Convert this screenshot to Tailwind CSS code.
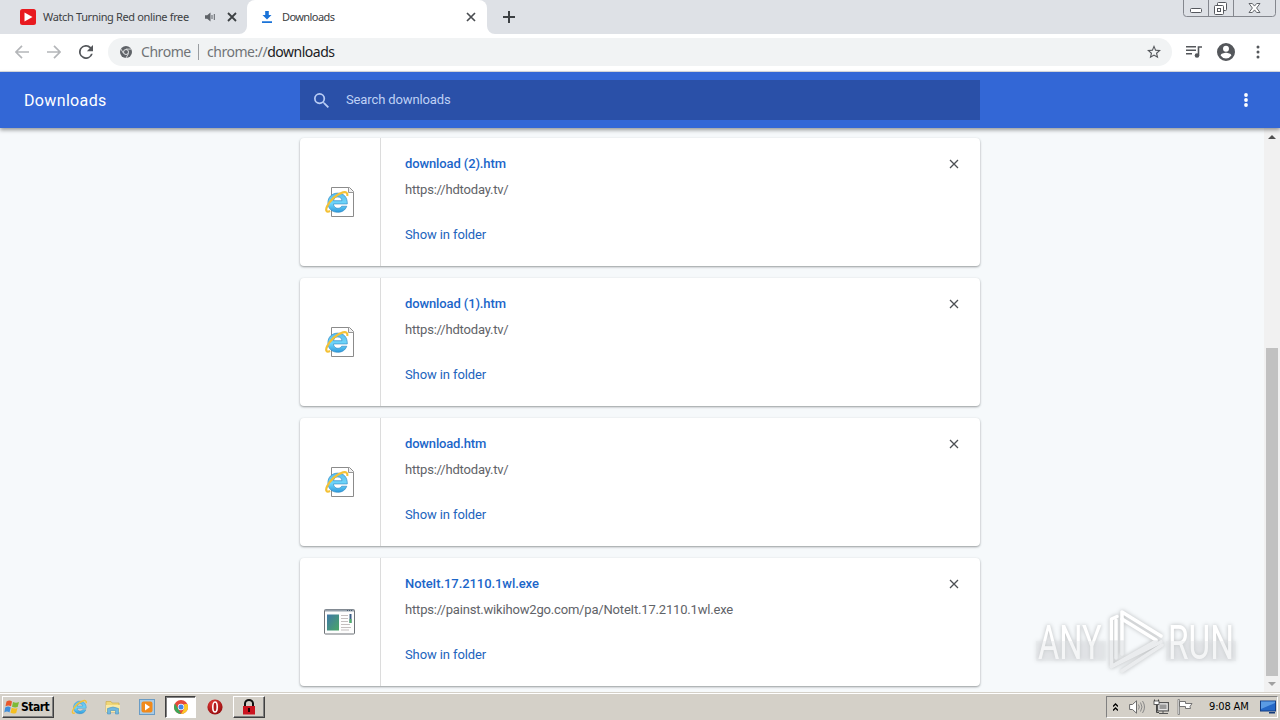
<!DOCTYPE html>
<html lang="en">
<head>
<meta charset="utf-8">
<title>Downloads</title>
<script src="https://cdn.jsdelivr.net/npm/@tailwindcss/browser@4"></script>
</head>
<body class="w-[1280px] h-[720px] overflow-hidden bg-white font-['Roboto',sans-serif]">
<svg class="absolute w-0 h-0">
  <defs>
    <linearGradient id="ieb" x1="0" y1="0" x2="0" y2="1"><stop offset="0" stop-color="#5cbcec"/><stop offset=".55" stop-color="#6fd6fa"/><stop offset="1" stop-color="#2f9bdc"/></linearGradient>
    <linearGradient id="scr" x1="0" y1="0" x2="1" y2="1"><stop offset="0" stop-color="#3f78a8"/><stop offset="1" stop-color="#4aa765"/></linearGradient>
    <radialGradient id="op" cx=".4" cy=".3" r=".8"><stop offset="0" stop-color="#e8403c"/><stop offset="1" stop-color="#8c0508"/></radialGradient>
    <linearGradient id="wm" gradientUnits="userSpaceOnUse" x1="0" y1="0" x2="0" y2="76"><stop offset=".5" stop-color="#ffffff"/><stop offset=".51" stop-color="#eaecee"/></linearGradient>
  </defs>
  <symbol id="ie" viewBox="0 0 24 24">
    <path d="M21.500 13.800H8.700c.2 2.600 1.900 4 4.100 4 1.700 0 2.900-.7 3.500-1.900h4.700c-1.300 3.700-4.300 5.600-8.400 5.600-5.400 0-9-3.500-9-8.700C3.600 7.500 7.400 3.800 12.600 3.800c5.700 0 9.100 3.800 8.900 10zM8.800 10.800h7.800c-.2-2.200-1.700-3.500-3.900-3.500-2.100 0-3.500 1.300-3.900 3.500z" fill="url(#ieb)" stroke="#2b86c2" stroke-width=".6"/>
    <path d="M21.500 6.500c.6-2.800-1-4.200-4-3.400C12 4.500 5.500 10.300 2.900 15.900c-1.900 4.200-.6 6 2.700 4.500" fill="none" stroke="#f4c136" stroke-width="2"/>
  </symbol>
  <symbol id="htm" viewBox="0 0 32 32">
    <path d="M7.500 1.500h18l4 4v25h-22z" fill="#fff" stroke="#8b8b8b"/>
    <path d="M24.500 1.500v5h5" fill="#eee" stroke="#999"/>
    <svg x="0" y="3" width="26" height="26" viewBox="0 0 24 24"><use href="#ie"/></svg>
  </symbol>
  <symbol id="x" viewBox="0 0 10 10"><path d="M1 1l8 8M9 1l-8 8" stroke="currentColor" stroke-width="1.300" fill="none"/></symbol>
</svg>

<div class="h-[720px] flex flex-col">
  <!-- tab strip -->
  <div class="h-[34px] shrink-0 bg-[#dee1e6] flex text-[#3c4043] font-['Noto_Sans',sans-serif]">
    <div class="w-[247px] flex items-center pl-5">
      <svg class="w-4 h-4" viewBox="0 0 16 16"><rect width="16" height="16" rx="2.500" fill="#e8191f"/><path d="M4.500 3.500l8 4.500-8 4.500z" fill="#fff"/></svg>
      <span class="ml-[7px] w-[148px] whitespace-nowrap text-[11px] tracking-[-0.36px]">Watch Turning Red online free</span>
      <svg class="ml-[14px] w-[11px] h-[10px]" viewBox="0 0 11 10"><path d="M0 3.300h2.200L5.500.5v9L2.200 6.700H0z" fill="#5f6368"/><path d="M7 3v4M9.300 2v6" stroke="#5f6368" fill="none"/></svg>
      <svg class="ml-[11px] w-[10px] h-[10px] text-[#3c4043]" viewBox="0 0 10 10"><path d="M1 1l8 8M9 1l-8 8" stroke="currentColor" stroke-width="1.800"/></svg>
    </div>
    <div class="relative w-[240px] bg-white rounded-t-[8px] flex items-center pl-[15px]">
      <svg class="absolute -left-2 bottom-0 w-2 h-2" viewBox="0 0 8 8"><path d="M8 0v8H0a8 8 0 0 0 8-8z" fill="#fff"/></svg>
      <svg class="absolute -right-2 bottom-0 w-2 h-2" viewBox="0 0 8 8"><path d="M0 0v8h8a8 8 0 0 1-8-8z" fill="#fff"/></svg>
      <svg class="w-[10px] h-[12px]" viewBox="0 0 10 12"><path d="M3.200 0h3.600v4H9.500L5 8.600.5 4h2.700zM0 10.300h10V12H0z" fill="#1a73d8"/></svg>
      <span class="ml-[10px] w-[184px] text-[11px] tracking-[-0.58px]">Downloads</span>
      <svg class="w-[10px] h-[10px]" viewBox="0 0 10 10"><path d="M1 1l8 8M9 1l-8 8" stroke="#4a4d51" stroke-width="1.700"/></svg>
    </div>
    <div class="flex-1 flex items-center pl-4">
      <svg class="w-3 h-3" viewBox="0 0 12 12"><path d="M6 0v12M0 6h12" stroke="#3c4043" stroke-width="2"/></svg>
    </div>
    <svg class="w-[98px] h-[18px]" viewBox="0 0 98 18">
      <path d="M1.500-2v15.500q0 3 3 3h86q3 0 3-3V-2M26.500 0v16M51.500 0v16" fill="none" stroke="#84878e"/>
      <rect x="8.500" y="8.500" width="11" height="4" rx="1" fill="#fff" stroke="#55585e"/>
      <rect x="35.500" y="2.500" width="9" height="8" rx="1" fill="#fff" stroke="#55585e"/><rect x="32.500" y="5.500" width="9" height="9" rx="1" fill="#fff" stroke="#55585e"/><rect x="35.500" y="8.500" width="3" height="3" fill="none" stroke="#55585e"/>
      <path d="M67 3.500h3.300l2.200 2.600 2.200-2.600H78l-3.400 4.500 3.400 4.500h-3.300l-2.200-2.600-2.200 2.600H67l3.400-4.500z" fill="#fff" stroke="#55585e" stroke-width=".9"/>
    </svg>
  </div>

  <!-- toolbar -->
  <div class="h-[38px] shrink-0 bg-white border-b border-[#dcdee2] flex items-center pl-[15px] pb-[2px]">
    <svg class="w-[14px] h-[14px]" viewBox="0 0 14 14"><path d="M14 7H1M7 .8L.9 7 7 13.200" fill="none" stroke="#b4b6b9" stroke-width="1.700"/></svg>
    <svg class="ml-[18px] w-[14px] h-[14px]" viewBox="0 0 14 14"><path d="M0 7h13M7 .8L13.100 7 7 13.200" fill="none" stroke="#b4b6b9" stroke-width="1.700"/></svg>
    <svg class="ml-[18px] w-[14px] h-[14px]" viewBox="4 4 16 16"><path d="M17.650 6.350A8 8 0 1 0 19.730 14h-2.080A6 6 0 1 1 12 6c1.660 0 3.140.69 4.220 1.780L13 11h7V4z" fill="#54575b"/></svg>
    <div class="ml-[15px] w-[1064px] h-7 rounded-full bg-[#f1f3f4] flex items-center pl-3 font-['Noto_Sans',sans-serif] text-[14px] text-[#707377] whitespace-nowrap">
      <svg class="w-3 h-3" viewBox="0 0 12 12"><circle cx="6" cy="6" r="6" fill="#5f6368"/><path d="M6 3.100h5.300M3.500 7.400L.9 3M8.600 7.400L6 12" stroke="#f1f3f4" stroke-width=".8"/><circle cx="6" cy="6" r="2.500" fill="#5f6368" stroke="#f1f3f4" stroke-width=".9"/></svg>
      <span class="ml-[9px] w-[50px] tracking-[-0.45px]">Chrome</span>
      <span class="ml-[7px] w-px h-4 bg-[#9a9da1]"></span>
      <span class="ml-[8px] w-[128px] tracking-[-0.48px]">chrome://<span class="text-[#202124]">downloads</span></span>
      <svg class="ml-[812px] w-[14px] h-[14px]" viewBox="2 2 20 20"><path d="M22 9.240l-7.190-.62L12 2 9.190 8.630 2 9.240l5.460 4.730L5.820 21 12 17.270 18.180 21l-1.630-7.030zM12 15.400l-3.760 2.270 1-4.280-3.320-2.880 4.380-.38L12 6.100l1.710 4.040 4.380.38-3.320 2.880 1 4.280z" fill="#54575b"/></svg>
    </div>
    <svg class="ml-[14px] w-4 h-[14px]" viewBox="0 0 16 14"><path d="M0 1.700h10M0 5.200h10M0 8.700h6" stroke="#54575b" stroke-width="1.500"/><path d="M12.500 10.500V2h3.500" fill="none" stroke="#54575b" stroke-width="1.600"/><circle cx="11" cy="10.500" r="2.300" fill="#54575b"/></svg>
    <svg class="ml-[15px] w-[18px] h-[18px]" viewBox="2 2 20 20"><path d="M12 2a10 10 0 1 0 0 20 10 10 0 0 0 0-20zm0 3a3.300 3.300 0 1 1 0 6.600A3.300 3.300 0 0 1 12 5zm0 14.200a7.200 7.200 0 0 1-6-3.220c.03-1.990 4-3.080 6-3.080 1.990 0 5.970 1.090 6 3.080a7.200 7.200 0 0 1-6 3.220z" fill="#54575b"/></svg>
    <svg class="ml-[21px] w-1 h-[14px]" viewBox="0 0 4 14"><g fill="#54575b"><circle cx="2" cy="2" r="1.500"/><circle cx="2" cy="7" r="1.500"/><circle cx="2" cy="12" r="1.500"/></g></svg>
  </div>

  <!-- downloads header -->
  <div class="relative z-10 h-14 shrink-0 bg-[#3367d6] flex items-center shadow-[0_2px_4px_rgba(0,0,0,0.4)]">
    <h1 class="w-[300px] pl-6 pt-[2px] text-[16px] tracking-[0.35px] text-white">Downloads</h1>
    <div class="w-[680px] h-10 bg-[#2a50a8] flex items-center pl-[14px]">
      <svg class="w-[15px] h-[15px]" viewBox="3 3 17.500 17.500"><path d="M15.500 14h-.79l-.28-.27A6.470 6.470 0 0 0 16 9.500 6.500 6.500 0 1 0 9.500 16c1.610 0 3.090-.59 4.230-1.570l.27.28v.79l5 4.990L20.490 19zm-6 0a4.500 4.500 0 1 1 0-9 4.500 4.500 0 0 1 0 9z" fill="#b8ccf5"/></svg>
      <span class="ml-[17px] text-[13px] tracking-[-0.12px] text-[#bfd1f5]">Search downloads</span>
    </div>
    <svg class="ml-[264px] w-1 h-[14px]" viewBox="0 0 4 14"><g fill="#fff"><circle cx="2" cy="2" r="1.900"/><circle cx="2" cy="7" r="1.900"/><circle cx="2" cy="12" r="1.900"/></g></svg>
  </div>

  <!-- list -->
  <div class="relative h-[564px] shrink-0 bg-[#f6f9fb] flex">
    <div class="w-[1264px] pl-[300px] pt-[10px] flex flex-col gap-3 text-[13px]">
      <div class="w-[680px] h-32 shrink-0 bg-white rounded-[4px] shadow-[0_1px_2px_rgba(60,64,67,0.4),0_1px_3px_rgba(60,64,67,0.15)] flex">
        <div class="w-[81px] border-r border-[#dcdcdc] flex items-center justify-center"><svg class="w-8 h-8"><use href="#htm"/></svg></div>
        <div class="flex-1 pl-6 pt-4"><div class="h-[18px] leading-[19px] font-medium tracking-[-0.12px] text-[#1b66c9]">download (2).htm</div><div class="mt-2 h-[18px] leading-[19px] text-[#5f6368] tracking-[-0.2px]">https://hdtoday.tv/</div><div class="mt-[27px] h-[18px] leading-[19px] text-[#2264bd] tracking-[-0.1px]">Show in folder</div></div>
        <svg class="mt-[21px] mr-[21px] w-[10px] h-[10px] text-[#4d5054]"><use href="#x"/></svg>
      </div>
      <div class="w-[680px] h-32 shrink-0 bg-white rounded-[4px] shadow-[0_1px_2px_rgba(60,64,67,0.4),0_1px_3px_rgba(60,64,67,0.15)] flex">
        <div class="w-[81px] border-r border-[#dcdcdc] flex items-center justify-center"><svg class="w-8 h-8"><use href="#htm"/></svg></div>
        <div class="flex-1 pl-6 pt-4"><div class="h-[18px] leading-[19px] font-medium tracking-[-0.12px] text-[#1b66c9]">download (1).htm</div><div class="mt-2 h-[18px] leading-[19px] text-[#5f6368] tracking-[-0.2px]">https://hdtoday.tv/</div><div class="mt-[27px] h-[18px] leading-[19px] text-[#2264bd] tracking-[-0.1px]">Show in folder</div></div>
        <svg class="mt-[21px] mr-[21px] w-[10px] h-[10px] text-[#4d5054]"><use href="#x"/></svg>
      </div>
      <div class="w-[680px] h-32 shrink-0 bg-white rounded-[4px] shadow-[0_1px_2px_rgba(60,64,67,0.4),0_1px_3px_rgba(60,64,67,0.15)] flex">
        <div class="w-[81px] border-r border-[#dcdcdc] flex items-center justify-center"><svg class="w-8 h-8"><use href="#htm"/></svg></div>
        <div class="flex-1 pl-6 pt-4"><div class="h-[18px] leading-[19px] font-medium tracking-[-0.17px] text-[#1b66c9]">download.htm</div><div class="mt-2 h-[18px] leading-[19px] text-[#5f6368] tracking-[-0.2px]">https://hdtoday.tv/</div><div class="mt-[27px] h-[18px] leading-[19px] text-[#2264bd] tracking-[-0.1px]">Show in folder</div></div>
        <svg class="mt-[21px] mr-[21px] w-[10px] h-[10px] text-[#4d5054]"><use href="#x"/></svg>
      </div>
      <div class="w-[680px] h-32 shrink-0 bg-white rounded-[4px] shadow-[0_1px_2px_rgba(60,64,67,0.4),0_1px_3px_rgba(60,64,67,0.15)] flex">
        <div class="w-[81px] border-r border-[#dcdcdc] flex items-center justify-center">
          <svg class="w-8 h-8" viewBox="0 0 32 32"><rect x=".5" y="3.500" width="30" height="24.500" rx="1" fill="#fdfdfd" stroke="#6e7378"/><path d="M1 4.500h29" stroke="#97a2ad" stroke-width="2"/><path d="M23 4.500h6" stroke="#465a70" stroke-dasharray="1 1"/><rect x="3" y="8.500" width="12" height="16" fill="url(#scr)"/><path d="M17 9.500h7M17 12.500h7M17 15.500h7M17 18.500h9M17 21.500h10M17 24h8" stroke="#c4bfbf"/><path d="M26.500 8v9" stroke="#3c5f86" stroke-width="2"/><path d="M26.500 13v4" stroke="#53b36a" stroke-width="2"/></svg>
        </div>
        <div class="flex-1 pl-6 pt-4"><div class="h-[18px] leading-[19px] font-medium tracking-[-0.07px] text-[#1b66c9]">NoteIt.17.2110.1wl.exe</div><div class="mt-2 h-[18px] leading-[19px] text-[#5f6368] tracking-[-0.18px]">https://painst.wikihow2go.com/pa/NoteIt.17.2110.1wl.exe</div><div class="mt-[27px] h-[18px] leading-[19px] text-[#2264bd] tracking-[-0.1px]">Show in folder</div></div>
        <svg class="mt-[21px] mr-[21px] w-[10px] h-[10px] text-[#4d5054]"><use href="#x"/></svg>
      </div>
    </div>
    <div class="w-4 bg-[#f1f1f1] flex flex-col items-center">
      <svg class="mt-[7px] w-2 h-1" viewBox="0 0 8 4"><path d="M0 4l4-4 4 4z" fill="#505050"/></svg>
      <div class="mt-[209px] w-3 h-[328px] bg-[#c1c1c1]"></div>
      <svg class="mt-[6px] w-2 h-1" viewBox="0 0 8 4"><path d="M0 0l4 4 4-4z" fill="#a0a0a0"/></svg>
    </div>
    <!-- watermark floating over the page -->
    <svg class="absolute left-[1030px] top-[474px] w-[234px] h-[76px] overflow-visible drop-shadow-[0_0_2px_rgba(0,0,0,0.25)]" viewBox="0 0 234 76" font-family="Roboto" font-size="49">
      <text transform="translate(8 57) scale(.7 1)" textLength="91" lengthAdjust="spacingAndGlyphs" fill="#fff">ANY</text>
      <text transform="translate(138 57) scale(.66 1)" textLength="100" lengthAdjust="spacingAndGlyphs" fill="#fff">RUN</text>
      <path d="M6 39h70v20H6zM136 39h70v20h-70z" fill="#dfe3e6" fill-opacity=".35"/>
      <g fill="none" stroke="url(#wm)" stroke-width="3.500" stroke-linejoin="round" stroke-linecap="round"><path d="M87 14.500L81.500 17v47.500L131 40"/><path d="M86 18v38"/><path d="M131 34L92 10v42"/><path d="M126 38L92 17"/><path d="M81.500 64.500L126 39M92 69l40-26"/></g>
    </svg>
  </div>

  <!-- taskbar -->
  <div class="h-7 shrink-0 bg-[#d4d0c8] border-t border-[#d4d0c8] shadow-[inset_0_1px_0_#fff] flex items-center pt-px font-['DejaVu_Sans_Condensed','DejaVu_Sans',sans-serif]">
    <div class="ml-[2px] w-[52px] h-[22px] border border-t-white border-l-white border-r-[#404040] border-b-[#404040] shadow-[inset_-1px_-1px_0_#808080] flex items-center pl-px">
      <svg class="w-4 h-4" viewBox="0 0 16 16"><path d="M2.500 2.500q3-2 5.500 0L7 7.300q-2.500-1.800-5.500 0z" fill="#e8582b"/><path d="M9 3q3 1.500 6 0l-1.300 5Q11 9 8 7.700z" fill="#7dba35"/><path d="M1.200 8.400q3-1.700 5.500 0l-1.200 5q-2.500-1.800-5.200 0z" fill="#3f8edb"/><path d="M7.700 8.800q3 1.500 5.800.1l-1.300 5q-2.900 1.200-5.700-.2z" fill="#f5bf21"/></svg>
      <span class="ml-[1px] text-[12px] font-bold text-black tracking-[-0.5px]">Start</span>
    </div>
    <svg class="ml-[17px] w-[17px] h-[18px]"><use href="#ie"/></svg>
    <svg class="ml-[17px] w-4 h-4" viewBox="0 0 16 16"><path d="M1 2.500h5l1 1.500h7v9H1z" fill="#f0d778" stroke="#cfae4e" stroke-width=".7"/><path d="M1 6h14v7H1z" fill="#fae9a5"/><path d="M2.500 15V9.500Q8 6.500 13.500 9.500V15h-3v-3.500h-5V15z" fill="#71b8df" stroke="#4a94bf" stroke-width=".6"/></svg>
    <svg class="ml-[18px] w-4 h-4" viewBox="0 0 16 16"><rect x=".5" y=".5" width="15" height="15" fill="#a9cbe5" stroke="#6a9cc5"/><rect x="2.500" y="2.500" width="11" height="11" rx="2" fill="#f18a1b"/><path d="M6 4.500l5 3.500-5 3.500z" fill="#fff"/></svg>
    <div class="ml-[10px] w-[31px] h-[22px] bg-white border border-t-[#404040] border-l-[#404040] border-r-white border-b-white shadow-[inset_1px_1px_0_#808080] flex items-center justify-center">
      <svg class="w-[14px] h-[14px]" viewBox="0 0 14 14"><circle cx="7" cy="7" r="7" fill="#e5493a"/><path d="M.9 3.600L4.300 9 7 14A7 7 0 0 1 .9 3.600z" fill="#3ba757"/><path d="M7 14l3-5 .2-5h3.100A7 7 0 0 1 7 14z" fill="#fbc926"/><circle cx="7" cy="7" r="3.200" fill="#fff"/><circle cx="7" cy="7" r="2.500" fill="#4285e8"/></svg>
    </div>
    <svg class="ml-[11px] w-4 h-4" viewBox="0 0 16 16"><circle cx="8" cy="8" r="7.600" fill="url(#op)"/><ellipse cx="8" cy="8" rx="2.200" ry="5" fill="#b41a1c" stroke="#fff" stroke-width="1.600"/></svg>
    <div class="ml-[10px] w-8 h-[22px] border border-t-white border-l-white border-r-[#404040] border-b-[#404040] shadow-[inset_-1px_-1px_0_#808080] flex items-center justify-center">
      <svg class="w-[14px] h-4" viewBox="0 0 14 16"><path d="M3 8V4.500a4 3.500 0 0 1 8 0V8" fill="none" stroke="#111" stroke-width="2"/><rect x="1" y="7" width="12" height="8.500" fill="#cb1420"/><path d="M7 9v4" stroke="#200" stroke-width="2"/></svg>
    </div>
    <div class="ml-auto w-[172px] h-[22px] mr-[2px] border border-t-[#808080] border-l-[#808080] border-r-white border-b-white flex items-center pl-[6px] text-black">
      <svg class="w-[5px] h-[9px]" viewBox="0 0 5 9"><path d="M0 3.500L2.500 1 5 3.500M0 7.500L2.500 5 5 7.500" fill="none" stroke="#000" stroke-width="1.400"/></svg>
      <svg class="ml-[11px] w-4 h-[14px] shrink-0" viewBox="0 0 16 14"><path d="M.6 4.500h2.900L7.500.8v12.400L3.500 9.500H.6z" fill="#fff" stroke="#6b6b6b"/><path d="M9.500 4.500q1.600 2.500 0 5M11.500 2.500q3 4.500 0 9M13.500 1q4 6 0 12" fill="none" stroke="#888"/></svg>
      <svg class="ml-2 w-4 h-4 shrink-0" viewBox="0 0 16 16"><rect x="4.500" y="3.500" width="11" height="8.500" fill="#b8b8b8" stroke="#555"/><rect x="6" y="5" width="8" height="5.500" fill="#999" stroke="#fff" stroke-width=".7"/><path d="M6 14.500h9M10 12v2" stroke="#555"/><path d="M1.500.5v4.500h4V.5M3.500 5v8.500H6" fill="none" stroke="#444"/><rect x="1" y="2" width="5" height="3.500" fill="#fff" stroke="#444" stroke-width=".8"/></svg>
      <svg class="ml-[8px] w-4 h-4 shrink-0" viewBox="0 0 16 16"><path d="M1 .5v15h1.500V.5z" fill="#fff" stroke="#777" stroke-width=".8"/><path d="M2.500 2.500h6v2h6.500l-2 3 .5 2h-5v-2h-6z" fill="#fff" stroke="#666" stroke-width=".9"/></svg>
      <span class="ml-[16px] w-[43px] shrink-0 pt-px text-[11px] tracking-[-0.15px] whitespace-nowrap">9:08 AM</span>
      <svg class="ml-[8px] w-4 h-[14px] shrink-0" viewBox="0 0 16 14"><rect x=".5" y="1" width="15" height="10" fill="#2568c7" stroke="#153e84"/><path d="M1 9L15 3V1.500H1z" fill="#5b9be4"/><path d="M9 12h6v1.500H9z" fill="#123a78"/></svg>
    </div>
  </div>
</div>
</body>
</html>
